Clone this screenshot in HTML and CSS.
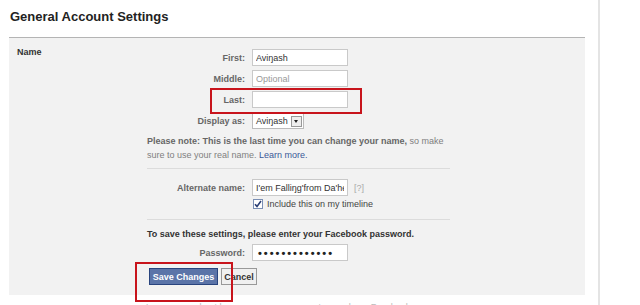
FILE: index.html
```html
<!DOCTYPE html>
<html>
  <head>
    <title>General Account Settings</title>
    <meta name="viewport" content="width=device-width, initial-scale=1.0">
    <link rel="stylesheet" href="styles.css">
  </head>
  <body>
    <div class="page">
      <div class="main">
        <h1>General Account Settings</h1>

        <div class="panel">
          <div class="section-name">Name</div>

          <div class="section-body">
            <div class="row">
              <label class="field-label">First:</label>
              <input class="text-input" type="text" value="Aviŋash" readonly>
            </div>
            <div class="row">
              <label class="field-label">Middle:</label>
              <input class="text-input" type="text" placeholder="Optional" readonly>
            </div>
            <div class="row">
              <label class="field-label">Last:</label>
              <input class="text-input" type="text" readonly>
            </div>
            <div class="row row-display">
              <label class="field-label">Display as:</label>
              <span class="fake-select">
                <span class="fake-select-text">Aviŋash</span>
                <span class="fake-select-arrow"></span>
              </span>
            </div>

            <p class="note">
              <b>Please note: This is the last time you can change your name,</b> so make
              sure to use your real name. <a href="#">Learn more.</a>
            </p>

            <div class="divider"></div>

            <div class="row row-alt">
              <label class="field-label">Alternate name:</label>
              <input class="text-input" type="text" value="I'em Falliŋg'from Da'heights" readonly>
              <span class="help">[?]</span>
            </div>
            <div class="row row-check">
              <span class="check-box">
                <svg width="8" height="8" viewBox="0 0 8 8"><path d="M1 4.2 L3 6.4 L7 1" fill="none" stroke="#2b3f75" stroke-width="1.6"/></svg>
              </span>
              <span class="check-label">Include this on my timeline</span>
            </div>

            <div class="divider divider-low"></div>

            <p class="save-title">To save these settings, please enter your Facebook password.</p>

            <div class="row row-pass">
              <label class="field-label">Password:</label>
              <span class="text-input pass-input">&bull;&bull;&bull;&bull;&bull;&bull;&bull;&bull;&bull;&bull;&bull;&bull;&bull;</span>
            </div>

            <div class="buttons">
              <button class="btn btn-save" type="button">Save Changes</button>
              <button class="btn btn-cancel" type="button">Cancel</button>
            </div>
          </div>
        </div>

        <p class="footnote">Learn more about how your name appears to people on Facebook.</p>
      </div>
    </div>

    <!-- red annotation boxes -->
    <div class="mark mark-last"></div>
    <div class="mark mark-save"></div>
  </body>
</html>
```

FILE: styles.css
```css
/* page */
body {
  margin: 0;
  background: #fff;
  font-family: "Liberation Sans", Arial, sans-serif;
  font-size: 9px;
  color: #333;
  overflow: hidden;
}

.page {
  display: flex;
  height: 305px;
}

.main {
  width: 600px;
  padding-left: 9px;
  box-sizing: border-box;
  border-right: 2px solid #e4e4e4;
}

h1 {
  margin: 0;
  padding: 9px 0 12px 1px;
  font-size: 13px;
  line-height: 16px;
  color: #222;
}

/* grey settings box */
.panel {
  width: 576px;
  border-top: 1px solid #b4b4b4;
  background: #f2f2f2;
  display: flex;
  padding: 11px 0 10px 0;
}

.section-name {
  width: 130px;
  padding-left: 8px;
  margin-top: -3px;
  font-weight: bold;
  color: #333;
  line-height: 12px;
}

.section-body {
  width: 310px;
}

.row {
  display: flex;
  align-items: center;
  margin-bottom: 4px;
}

.field-label {
  width: 98px;
  margin-right: 7px;
  text-align: right;
  font-weight: bold;
  color: #666;
}

.text-input {
  box-sizing: border-box;
  width: 96px;
  height: 17px;
  padding: 0 3px;
  border: 1px solid #c9c9c9;
  background: #fff;
  font-family: "Liberation Sans", Arial, sans-serif;
  font-size: 9px;
  color: #333;
  outline: none;
}

.text-input::placeholder {
  color: #999;
}

.row-display {
  margin-top: 5px;
  margin-bottom: 0;
}

.fake-select {
  box-sizing: border-box;
  width: 52px;
  height: 16px;
  border: 1px solid #bbb;
  background: #fff;
  display: flex;
  align-items: center;
  justify-content: space-between;
  padding: 0 1px 0 3px;
}

.fake-select-arrow {
  box-sizing: border-box;
  width: 11px;
  height: 11px;
  border: 1px solid #999;
  background: #eee;
  position: relative;
}

.fake-select-arrow::after {
  content: "";
  position: absolute;
  left: 2px;
  top: 3px;
  border-left: 2.5px solid transparent;
  border-right: 2.5px solid transparent;
  border-top: 3px solid #222;
}

.note {
  width: 300px;
  margin: 5px 0 0 0;
  line-height: 14px;
  color: #808080;
}

.note b {
  color: #666;
}

.note a {
  color: #3b5998;
  text-decoration: none;
}

.divider {
  width: 303px;
  margin-top: 6px;
  border-top: 1px solid #dcdcdc;
}

.row-alt {
  margin-top: 10px;
  margin-bottom: 2px;
}

.help {
  margin-left: 6px;
  color: #aaa;
}

.row-check {
  padding-left: 106px;
  margin-bottom: 0;
}

.check-box {
  box-sizing: border-box;
  width: 10px;
  height: 10px;
  border: 1px solid #7a8fb4;
  background: #fff;
  display: flex;
  align-items: center;
  justify-content: center;
}

.check-label {
  margin-left: 4px;
  color: #444;
  line-height: 12px;
}

.divider-low {
  margin-top: 9px;
}

.save-title {
  margin: 8px 0 0 0;
  line-height: 12px;
  font-weight: bold;
  color: #333;
  white-space: nowrap;
}

.row-pass {
  margin-top: 4px;
  margin-bottom: 0;
}

.pass-input {
  display: flex;
  align-items: center;
  padding-left: 5px;
  font-size: 11px;
  font-weight: bold;
  letter-spacing: 2px;
  color: #222;
}

.buttons {
  display: flex;
  gap: 3px;
  margin-top: 7px;
  padding-left: 2px;
}

.btn {
  height: 17px;
  padding: 0;
  font-family: "Liberation Sans", Arial, sans-serif;
  font-size: 9px;
  font-weight: bold;
  cursor: pointer;
}

.btn-save {
  width: 69px;
  background: #5b74a8;
  border: 1px solid #29447e;
  color: #fff;
}

.btn-cancel {
  width: 36px;
  background: #f0f0f0;
  border: 1px solid #999;
  color: #333;
}

.footnote {
  margin: 7px 0 0 137px;
  color: #bbb;
}

/* annotations drawn over the screenshot */
.mark {
  position: absolute;
  border: 2px solid #c8141c;
  box-sizing: border-box;
}

.mark-last {
  left: 210px;
  top: 88px;
  width: 152px;
  height: 26px;
}

.mark-save {
  left: 135px;
  top: 262px;
  width: 98px;
  height: 40px;
}
```
